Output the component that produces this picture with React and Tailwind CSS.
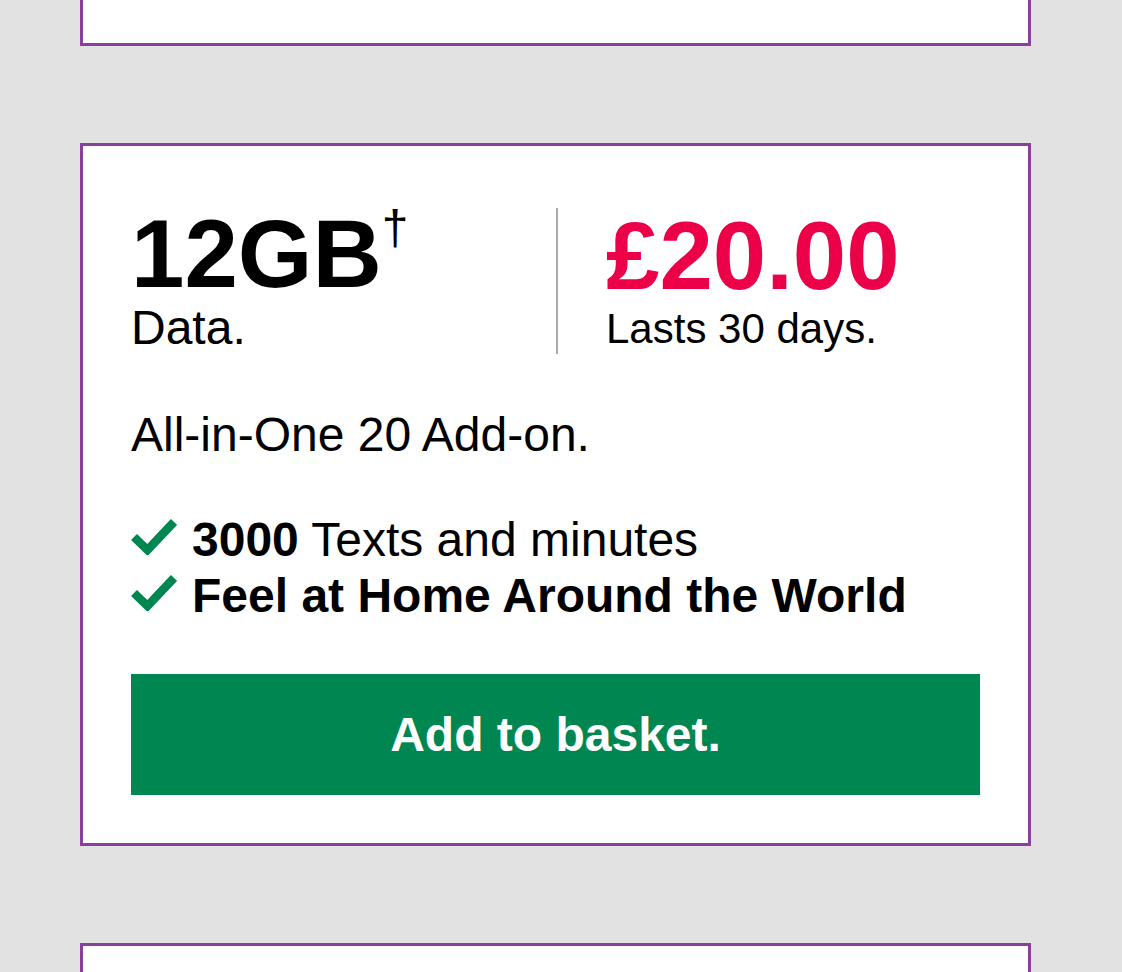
import React from "react";

const font = { fontFamily: '"Liberation Sans", Arial, Helvetica, sans-serif' };

function Tick() {
  return (
    <svg width="46" height="37" viewBox="0 0 46 37" className="mt-[6px] shrink-0">
      <path d="M3 19 L16.5 32 L43 4" fill="none" stroke="#008651" strokeWidth="8.5" />
    </svg>
  );
}

function PlanCard() {
  return (
    <div className="ml-[80px] w-[951px] border-[3px] border-[#893f9b] bg-white px-[48px] pt-[60px] pb-[48px] text-black">
      {/* Headline: data + price */}
      <div className="flex items-start">
        <div className="w-[425px] shrink-0">
          <div className="h-[96px] text-[96px] font-bold leading-[96px]">
            12GB<span className="relative -top-[43px] text-[48px] leading-[0] font-normal">†</span>
          </div>
          <div className="text-[48px] leading-[52px]">Data.</div>
        </div>
        <div className="mt-[2px] border-l-2 border-[#ababab] pl-[48px]">
          <div className="text-[96px] font-bold leading-[96px] text-[#ec0048]">£20.00</div>
          <div className="text-[42px] leading-[50px]">Lasts 30 days.</div>
        </div>
      </div>

      <p className="mt-[55px] text-[48px] leading-[52px]">All-in-One 20 Add-on.</p>

      <ul className="mt-[51px] text-[48px] leading-[56px]">
        <li className="flex items-start gap-[15px]">
          <Tick />
          <span>
            <b>3000</b> Texts and minutes
          </span>
        </li>
        <li className="flex items-start gap-[15px]">
          <Tick />
          <b>Feel at Home Around the World</b>
        </li>
      </ul>

      <button className="mt-[50px] flex h-[121px] w-full items-center justify-center bg-[#008651] text-[48px] font-bold text-white">
        Add to basket.
      </button>
    </div>
  );
}

export default function App() {
  return (
    <div className="min-h-screen bg-[#e2e2e2] pb-[40px]" style={font}>
      {/* previous card, cut off at the top */}
      <div className="ml-[80px] h-[46px] w-[951px] border-x-[3px] border-b-[3px] border-[#893f9b] bg-white" />
      <div className="mt-[97px]">
        <PlanCard />
      </div>
      {/* next card, cut off at the bottom */}
      <div className="mt-[97px] ml-[80px] h-[200px] w-[951px] border-x-[3px] border-t-[3px] border-[#893f9b] bg-white" />
    </div>
  );
}
